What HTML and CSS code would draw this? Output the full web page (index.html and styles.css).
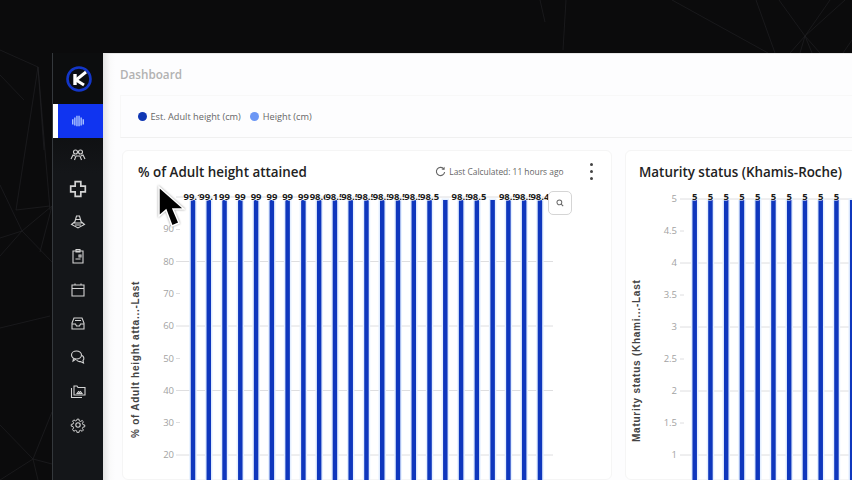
FILE: index.html
```html
<!DOCTYPE html>
<html lang="en">
<head>
<meta charset="utf-8">
<title>Dashboard</title>
<link rel="stylesheet" href="styles.css">
</head>
<body>
<svg class="backdrop" viewBox="0 0 852 480" aria-hidden="true">
  <g class="web">
    <path d="M0 50 38 67 16 210M38 67 50 210M38 67 44 150M16 210 50 206M0 238 22 231 52 206M22 231 0 256M0 185 22 231 52 262M40 252 52 206M0 328 50 316M0 425 33 459 52 412M33 459 0 480M33 459 52 464M33 459 38 480"/>
    <path d="M672 0 768 53M756 0 775 53M779 0 805 36 820 53M845 0 805 36 790 53M830 0 805 36M805 36 800 53M805 36 812 53M852 40 843 53M540 0 545 22M566 0 563 50M0 75 24 100"/>
  </g>
</svg>
<div class="window">
  <nav class="sidebar">
    <div class="logo">
      <svg viewBox="0 0 28 28" width="28" height="28" aria-hidden="true">
        <circle cx="14" cy="14" r="11.500" fill="#0b0d14" stroke="#1336c8" stroke-width="2.600"/>
        <path d="M10 9V20" stroke="#fff" stroke-width="3.400" fill="none"/>
        <path d="M11 15 21 7M11 15 19 20" stroke="#fff" stroke-width="3" fill="none"/>
      </svg>
    </div>
    <a class="nav-item active">
      <svg class="icon icon-bars" viewBox="0 0 16 16"><path d="M2 6v6M4.400 4v9M6.800 2v12M9.200 2v12M11.600 4v9M14 6v6" stroke-width="1.500"/></svg>
    </a>
    <a class="nav-item">
      <svg class="icon" viewBox="0 0 16 16"><circle cx="5.500" cy="5" r="2"/><circle cx="10.500" cy="5" r="2"/><path d="M1 12 3 8 5 9M15 12 13 8 11 9M4.500 13 6 9h4l1.500 4"/></svg>
    </a>
    <a class="nav-item">
      <svg class="icon wide" viewBox="0 0 16 16"><path d="M5.500 1.500h5v4h4v5h-4v4h-5v-4h-4v-5h4z" stroke-width="1.500"/></svg>
    </a>
    <a class="nav-item">
      <svg class="icon" viewBox="0 0 16 16"><path d="M6.500 2h3l2 7h-7zM5 5.500h6M4.500 8 1.500 10.500 8 14l6.500-3.500L11.500 8M5 11h6"/></svg>
    </a>
    <a class="nav-item">
      <svg class="icon" viewBox="0 0 16 16"><path d="M3 3h10v12H3zM6 1.500h4V4H6z"/><path d="M9 7h2v2H9zM5.500 11h5"/></svg>
    </a>
    <a class="nav-item">
      <svg class="icon" viewBox="0 0 16 16"><path d="M2 3h12v11H2zM2 6.500h12M5 1.500V3M11 1.500V3"/></svg>
    </a>
    <a class="nav-item">
      <svg class="icon" viewBox="0 0 16 16"><path d="M4 2h8l2 5v6H2V7zM2 8h3.500l1 2h3l1-2H14M5 4.500h6"/></svg>
    </a>
    <a class="nav-item">
      <svg class="icon" viewBox="0 0 16 16"><ellipse cx="6.500" cy="6" rx="5" ry="4"/><path d="M3.500 9.500 3 12l3-2M12 6.500c2 1 2.500 3.500 1 5l.5 2.500-3-1.500c-1.500.3-3-.2-4-1.500"/></svg>
    </a>
    <a class="nav-item">
      <svg class="icon" viewBox="0 0 16 16"><path d="M4 3h3l1 1.500h7V12H4zM1.500 5v9.500H12M7 10.500l1.500-2 1 1 1-1 1.500 2z"/></svg>
    </a>
    <a class="nav-item">
      <svg class="icon" viewBox="0 0 16 16"><circle cx="8" cy="8" r="2.200"/><path d="M7 1.500h2l.4 2 1.500.6 1.700-1.100 1.400 1.400-1.100 1.700.6 1.500 2 .4v2l-2 .4-.6 1.500 1.100 1.700-1.400 1.400-1.700-1.100-1.500.6-.4 2H7l-.4-2-1.500-.6-1.700 1.100L2 12.900 3.100 11.200l-.6-1.500-2-.4v-2l2-.4.6-1.500L2 3.700 3.400 2.300 5.100 3.400l1.500-.6z" transform="translate(.8 .8) scale(.9)"/></svg>
    </a>
  </nav>

  <main class="content">
    <h1 class="page-title">Dashboard</h1>
    <section class="legend">
      <span class="legend-item"><i class="dot dot-dark"></i>Est. Adult height (cm)</span>
      <span class="legend-item"><i class="dot dot-light"></i>Height (cm)</span>
    </section>
    <div class="cards">
      <article class="card card-left">
        <header class="card-head">
          <h2 class="card-title">% of Adult height attained</h2>
          <div class="card-meta">
            <svg class="refresh" viewBox="0 0 12 12"><path d="M9.800 3.500A4.500 4.500 0 1 0 10.500 6.500"/><path class="refresh-tip" d="M10.500 0.800v3.400H7.100z"/></svg>
            <span>Last Calculated: 11 hours ago</span>
            <span class="kebab"><i></i><i></i><i></i></span>
          </div>
        </header>
        <button class="zoom-btn" type="button" aria-label="Search">
          <svg viewBox="0 0 10 10" width="8" height="8"><circle cx="4.200" cy="4.200" r="3"/><path d="M6.500 6.500 9 9"/></svg>
        </button>
        <svg class="chart" viewBox="122 185 490 295" aria-hidden="true">
          <g class="grid">
            <path d="M176 197H553M176 261.500H553M176 326H553M176 390.500H553M176 455H553"/>
            <path d="M176 229.500h4M176 293.500h4M176 358.500h4M176 422.500h4"/>
          </g>
          <g class="ticks">
            <text x="174" y="232">90</text><text x="174" y="264.500">80</text><text x="174" y="296.500">70</text><text x="174" y="329">60</text><text x="174" y="361.500">50</text><text x="174" y="393.500">40</text><text x="174" y="426">30</text><text x="174" y="458">20</text>
          </g>
          <text class="axis-title" transform="translate(139 438) rotate(-90)">% of Adult height atta...-Last</text>
          <g class="bars">
            <rect x="190.750" y="200" width="4.500" height="290"/><rect x="206.520" y="200" width="4.500" height="290"/><rect x="222.290" y="200" width="4.500" height="290"/><rect x="238.060" y="200" width="4.500" height="290"/><rect x="253.830" y="200" width="4.500" height="290"/><rect x="269.600" y="200" width="4.500" height="290"/><rect x="285.370" y="200" width="4.500" height="290"/><rect x="301.140" y="200" width="4.500" height="290"/><rect x="316.910" y="200" width="4.500" height="290"/><rect x="332.680" y="200" width="4.500" height="290"/><rect x="348.450" y="200" width="4.500" height="290"/><rect x="364.220" y="200" width="4.500" height="290"/><rect x="379.990" y="200" width="4.500" height="290"/><rect x="395.760" y="200" width="4.500" height="290"/><rect x="411.530" y="200" width="4.500" height="290"/><rect x="427.300" y="200" width="4.500" height="290"/><rect x="443.070" y="200" width="4.500" height="290"/><rect x="458.840" y="200" width="4.500" height="290"/><rect x="474.610" y="200" width="4.500" height="290"/><rect x="490.380" y="200" width="4.500" height="290"/><rect x="506.150" y="200" width="4.500" height="290"/><rect x="521.920" y="200" width="4.500" height="290"/><rect x="537.690" y="200" width="4.500" height="290"/>
          </g>
          <g class="values">
            <text x="193" y="200">99.1</text><text x="208.800" y="200">99.1</text><text x="224.500" y="200">99</text><text x="240.300" y="200">99</text><text x="256.100" y="200">99</text><text x="271.900" y="200">99</text><text x="287.600" y="200">99</text><text x="303.400" y="200">99</text><text x="319.200" y="200">98.6</text><text x="334.900" y="200">98.5</text><text x="350.700" y="200">98.5</text><text x="366.500" y="200">98.5</text><text x="382.200" y="200">98.5</text><text x="398" y="200">98.5</text><text x="413.800" y="200">98.5</text><text x="429.600" y="200">98.5</text><text x="461.100" y="200">98.5</text><text x="476.900" y="200">98.5</text><text x="508.400" y="200">98.5</text><text x="524.200" y="200">98.5</text><text x="539.900" y="200">98.4</text>
          </g>
        </svg>
      </article>
      <article class="card card-right">
        <header class="card-head">
          <h2 class="card-title">Maturity status (Khamis-Roche)</h2>
        </header>
        <svg class="chart" viewBox="625 185 227 295" aria-hidden="true">
          <g class="grid">
            <path d="M680 199H852M680 263H852M680 327H852M680 391H852M680 455H852"/>
            <path d="M680 231h4M680 295h4M680 359h4M680 423h4"/>
          </g>
          <g class="ticks">
            <text x="677" y="202">5</text><text x="677" y="234">4.5</text><text x="677" y="266">4</text><text x="677" y="298">3.5</text><text x="677" y="330">3</text><text x="677" y="362">2.5</text><text x="677" y="394">2</text><text x="677" y="426">1.5</text><text x="677" y="458">1</text>
          </g>
          <text class="axis-title" transform="translate(640 442) rotate(-90)">Maturity status (Khami...-Last</text>
          <g class="bars">
            <rect x="692.450" y="200" width="4.500" height="290"/><rect x="708.200" y="200" width="4.500" height="290"/><rect x="723.950" y="200" width="4.500" height="290"/><rect x="739.700" y="200" width="4.500" height="290"/><rect x="755.450" y="200" width="4.500" height="290"/><rect x="771.200" y="200" width="4.500" height="290"/><rect x="786.950" y="200" width="4.500" height="290"/><rect x="802.700" y="200" width="4.500" height="290"/><rect x="818.450" y="200" width="4.500" height="290"/><rect x="834.200" y="200" width="4.500" height="290"/><rect x="849.950" y="200" width="4.500" height="290"/>
          </g>
          <g class="values">
            <text x="694.700" y="200">5</text><text x="710.500" y="200">5</text><text x="726.200" y="200">5</text><text x="742" y="200">5</text><text x="757.700" y="200">5</text><text x="773.500" y="200">5</text><text x="789.200" y="200">5</text><text x="805" y="200">5</text><text x="820.700" y="200">5</text><text x="836.500" y="200">5</text>
          </g>
        </svg>
      </article>
    </div>
  </main>
</div>
<svg class="cursor" viewBox="0 0 28 44" width="28" height="44" aria-hidden="true">
  <path d="M2 2V31L9 25 15 41 22 38 16 24H27z" fill="#000" stroke="#fff" stroke-width="1.500"/>
</svg>
</body>
</html>
```
FILE: styles.css
```css
* { box-sizing: border-box; }
html, body { margin: 0; height: 100%; }
body {
  position: relative;
  width: 852px;
  height: 480px;
  overflow: hidden;
  background: #0b0b0c;
  padding: 53px 0 0 52px;
  font-family: "Open Sans", "Liberation Sans", sans-serif;
}
.backdrop { position: absolute; left: 0; top: 0; width: 852px; height: 480px; }
.web path { fill: none; stroke: #242426; stroke-width: .6; }

.window { position: relative; display: flex; width: 800px; height: 427px; }

.sidebar {
  width: 51px;
  flex: none;
  display: flex;
  flex-direction: column;
  background: linear-gradient(#0c0d0e 0, #0c0d0e 60px, #141619 120px);
  border-left: 1px solid #34383c;
}
.logo { height: 51px; display: flex; align-items: center; justify-content: center; margin-left: 2px; }
.nav-item {
  height: 33.750px;
  display: flex;
  align-items: center;
  justify-content: center;
}
.nav-item.active { background: #1034f0; border-left: 5px solid #fff; padding-right: 5px; height: 34px; }
.icon { width: 16px; height: 16px; fill: none; stroke: #d4d4d4; stroke-width: 1.100; }
.icon.wide { width: 18px; height: 18px; }
.icon.icon-bars { width: 14px; height: 14px; }
.active .icon { stroke: #b4ccff; }

.content {
  flex: 1;
  min-width: 0;
  overflow: hidden;
  padding: 0 0 0 17px;
  background: linear-gradient(90deg, #e4e4e4 0, #fafafa 7px, #fdfdfe 12px);
  border-top: 1px solid #e8e8e8;
}
.page-title {
  margin: 12px 0 0;
  height: 17px;
  line-height: 16px;
  font-size: 11.700px;
  font-weight: 600;
  color: #b2b2b2;
}
.legend {
  margin-top: 12px;
  height: 43px;
  display: flex;
  align-items: center;
  gap: 9.500px;
  padding-left: 17px;
  border-top: 1px solid #f8f8f8;
  border-left: 1px solid #f8f8f8;
  border-bottom: 1px solid #f0f0f0;
  font-size: 9.200px;
  color: #666;
}
.legend-item { display: flex; align-items: center; gap: 3.500px; }
.dot { width: 9px; height: 9px; border-radius: 50%; }
.dot-dark { background: #0f37b4; }
.dot-light { background: #6c97f5; }

.cards { display: flex; gap: 13px; margin: 12px 0 0 2px; }
.card {
  position: relative;
  flex: none;
  height: 330px;
  background: #fff;
  border: 1px solid #f5f5f5;
  border-radius: 6px;
}
.card-left { width: 490px; }
.card-right { width: 300px; }
.card-head {
  height: 35px;
  display: flex;
  align-items: center;
  justify-content: space-between;
  padding: 6px 18px 0 15px;
}
.card-right .card-head { padding-left: 13px; }
.card-title { margin: 0; font-size: 13.400px; font-weight: 600; color: #222; white-space: nowrap; }
.card-meta { display: flex; align-items: center; gap: 3px; font-size: 8.400px; color: #666; }
.refresh { width: 11px; height: 11px; fill: none; stroke: #666; stroke-width: 1.200; }
.refresh-tip { fill: #666; stroke: none; }
.kebab { display: flex; flex-direction: column; gap: 3.500px; margin-left: 23px; }
.kebab i { width: 3.500px; height: 3.500px; border-radius: 50%; background: #444; }
.chart { display: block; position: absolute; left: -1px; top: 34px; height: 295px; overflow: hidden; }
.card-left .chart { width: 490px; }
.card-right .chart { width: 227px; }
.grid path { fill: none; stroke: #dedee0; stroke-width: 1; }
.ticks text { font-size: 9.500px; fill: #a3a3a3; text-anchor: end; font-family: "Open Sans", sans-serif; }
.axis-title { font-family: "Liberation Sans", sans-serif; font-size: 10px; font-weight: 700; fill: #444; letter-spacing: .75px; }
.bars rect { fill: #0f37bd; stroke: #e4efff; stroke-width: 3px; paint-order: stroke; }
.values text {
  font-family: "Open Sans", sans-serif;
  font-size: 9.500px;
  font-weight: 700;
  fill: #1a1a1a;
  text-anchor: middle;
  stroke: #fff;
  stroke-width: 1.200px;
  paint-order: stroke;
}
.zoom-btn {
  position: absolute;
  z-index: 1;
  left: 425px;
  top: 40px;
  width: 24px;
  height: 24px;
  padding: 0;
  display: flex;
  align-items: center;
  justify-content: center;
  background: #fff;
  border: 1px solid #d5d5d5;
  border-radius: 5px;
}
.zoom-btn svg { fill: none; stroke: #666; stroke-width: 1.300; }
.cursor { position: absolute; left: 157px; top: 185px; filter: drop-shadow(0 0 1px #999); }
```
